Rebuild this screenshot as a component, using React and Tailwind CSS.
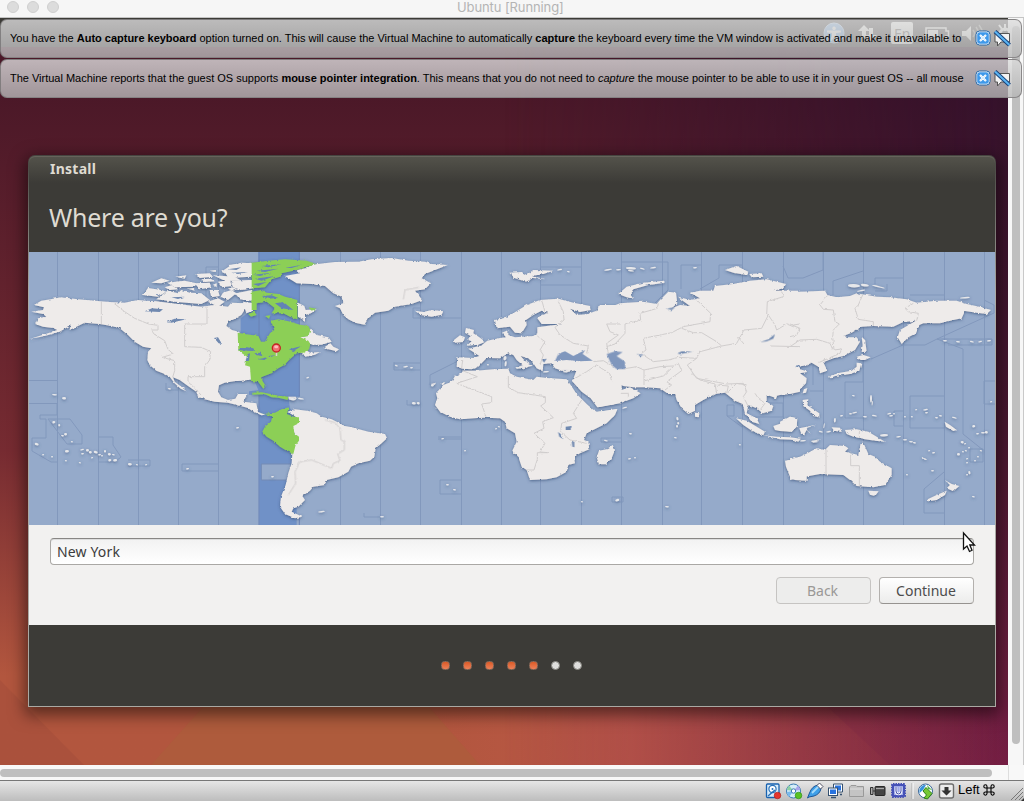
import React from "react";

const zoneX = [57, 98, 138, 178, 218, 340, 380, 420, 461, 501, 540, 581, 621, 662, 701, 742, 783, 823, 863, 903, 944, 984];

// [x, y, length, height] of the small islands, in map pixels
const islets = [
  [52, 421, 3, 2], [58, 424, 2, 2], [64, 433, 3, 2], [61, 435, 3, 1], [71, 441, 2, 1], [35, 443, 4, 2], [42, 454, 2, 1], [51, 456, 2, 1],
  [65, 450, 4, 2], [65, 460, 2, 1], [79, 462, 2, 1], [80, 449, 4, 1], [81, 453, 3, 1], [86, 449, 3, 2], [89, 451, 3, 2], [94, 451, 4, 2],
  [91, 457, 2, 1], [98, 454, 3, 1], [104, 450, 2, 2], [108, 453, 3, 2], [112, 454, 3, 1], [108, 459, 3, 2], [113, 459, 4, 2], [101, 455, 2, 1],
  [128, 463, 4, 2], [136, 464, 2, 1], [145, 464, 2, 1], [186, 468, 3, 1], [62, 397, 4, 2], [52, 394, 5, 1], [168, 388, 3, 1],
  [306, 377, 3, 1], [236, 427, 3, 1], [271, 476, 3, 1], [290, 398, 6, 2], [298, 398, 6, 1], [395, 365, 3, 1], [403, 366, 5, 1], [410, 367, 3, 1],
  [431, 384, 3, 2], [412, 402, 4, 2], [417, 402, 3, 2], [441, 438, 3, 1], [464, 450, 2, 1], [446, 484, 3, 1], [453, 489, 3, 1],
  [498, 426, 2, 1], [495, 428, 2, 1], [318, 511, 7, 1], [380, 516, 4, 1], [581, 501, 2, 1], [604, 440, 4, 1], [615, 499, 4, 2], [628, 458, 3, 1],
  [634, 457, 2, 1], [629, 433, 3, 1], [674, 437, 3, 1], [676, 417, 2, 3], [677, 422, 2, 2], [676, 425, 2, 2], [665, 506, 4, 1], [739, 444, 2, 1],
  [622, 407, 5, 1], [604, 269, 8, 1], [616, 269, 5, 1], [626, 267, 10, 2], [628, 270, 6, 1], [640, 268, 5, 1], [650, 267, 6, 1], [693, 267, 4, 1],
  [848, 284, 12, 3], [861, 284, 8, 2], [872, 286, 13, 1], [857, 290, 8, 1], [960, 297, 10, 1], [943, 340, 4, 1], [956, 341, 4, 1], [970, 341, 4, 1],
  [978, 341, 4, 1], [987, 340, 4, 1], [870, 395, 2, 7], [872, 401, 1, 4], [852, 395, 3, 1], [852, 412, 5, 1], [840, 415, 3, 1], [849, 413, 3, 1], [863, 416, 4, 1],
  [872, 415, 5, 1], [887, 413, 4, 1], [889, 415, 4, 1], [893, 413, 2, 1], [904, 416, 2, 1], [911, 416, 2, 1], [915, 409, 2, 1], [923, 409, 5, 1],
  [925, 412, 3, 1], [935, 417, 3, 1], [939, 415, 3, 1], [952, 417, 5, 1], [972, 425, 3, 2], [976, 433, 3, 1], [981, 432, 4, 1], [985, 431, 3, 2],
  [961, 441, 3, 2], [964, 443, 2, 1], [968, 447, 2, 1], [957, 453, 3, 2], [962, 451, 2, 1], [965, 450, 2, 1], [966, 458, 2, 1], [966, 462, 2, 1],
  [974, 460, 2, 1], [977, 456, 2, 1], [980, 450, 2, 1], [968, 471, 2, 3], [966, 474, 2, 1], [931, 470, 3, 1], [906, 474, 2, 1], [972, 496, 3, 1],
  [990, 401, 2, 1], [896, 436, 5, 1], [903, 439, 4, 1], [909, 441, 4, 1], [913, 442, 3, 1], [928, 450, 2, 1], [932, 452, 3, 1], [880, 434, 8, 2],
  [834, 418, 2, 4], [824, 423, 1, 5], [819, 431, 4, 1], [826, 431, 5, 1], [800, 440, 6, 1], [811, 441, 7, 1], [487, 364, 2, 1], [504, 356, 3, 4],
  [516, 367, 6, 1], [543, 371, 6, 1], [563, 371, 5, 1], [505, 361, 2, 5], [567, 271, 3, 1], [557, 269, 5, 1],
];

function Part({ x, children }) {
  return <g transform={`translate(${x} 250) scale(.33333)`}>{children}</g>;
}

function WorldMap() {
  return (
    <svg className="block h-[273px] w-[966px]" viewBox="29 252 966 273">
      <defs>
        <filter id="coast" x="-5%" y="-5%" width="110%" height="110%">
          <feDropShadow dx="0" dy="1" stdDeviation="1.5" floodColor="#3a527c" floodOpacity=".8" />
        </filter>
        <filter id="rough" x="-2%" y="-2%" width="104%" height="104%">
          <feTurbulence type="fractalNoise" baseFrequency=".3" numOctaves="2" seed="4" result="n" />
          <feDisplacementMap in="SourceGraphic" in2="n" scale="2.6" xChannelSelector="R" yChannelSelector="G" />
        </filter>
      </defs>
      <rect x="29" y="252" width="966" height="273" fill="#95aaca" />
      <Part x={225}>
        <path fill="#7091c7" d="M100,6H223V440H190L195,475 215,500V825H103V435L72,434V424L100,421 60,320 40,302 47,240V205L80,180V40L100,35Z" />
        <path d="M109,642H198V690H109Z" fill="#95aaca" stroke="#748cb5" strokeWidth="3" />
        <path d="M102,6V300M223,6V440M102,435V825M223,800V825" stroke="#6984b6" strokeWidth="3" />
      </Part>
      <g fill="none" stroke="#7f95ba" strokeWidth="1" opacity=".85">
        {zoneX.map((x) => (
          <path key={x} d={`M${x + 0.5},252V525`} />
        ))}
        <path d="M29,380.5H57M29,403.5H57V415H40V419H46V438H32V451L51,462H57M48,419H70L82,435V444H67ZM98,437H113V445L121,457 115,462H98M128,460H150V466H128M166,383V390H178M218,464H182V471H218M206,267H218M206,267V305" />
        <path d="M420,308H413V318H461M394,363H420M394,362V370H420M407,400V405H420M430,385V375L458,361M438,437H461M438,439H461M440,480H461M440,480V494H461M364,513V517H380" />
        <path d="M540,267H581M540,285H581M621,262H668V290L655,303M681,265H701M681,265V289M700,289L719,278V265H742M783,266L788,278H803L823,270M823,270V252M833,295V281L863,271M875,284V278H903M887,284V291H875M910,295H944M984,300L994,305V313L937,339 925,345H903L871,359M937,339L963,349V434L983,450M937,339H992V345H948" />
        <path d="M863,382H845V418H863M863,382V360M910,396H944M910,396V428H944M903,411H894V426H903M984,381H995M984,381V404H995M944,472L924,489V513H944M970,449H983V462H970ZM601,438H621M601,438V442H621M612,497H623V502H612ZM727,405H734V416H727ZM727,416L742,427M756,403H783V417H750M813,365V385M810,391H823" />
      </g>
      <g filter="url(#coast)">
        <g filter="url(#rough)">
          <g fill="#eeebea">
            <Part x={28}>
              <path d="M18,165L40,152 68,148 98,142 150,148 200,152 245,156 290,158 330,150 352,152 385,154 430,160 480,166 520,170 560,165 600,170 610,158 650,160 655,172 640,195 618,208 600,215 595,228 612,240 634,246 634,300 662,305 662,335 668,350 676,388 640,392 618,394 590,398 573,406 570,425 580,442 600,450 622,446 630,432 658,432 646,455 685,460 690,486 712,494 700,496 672,482 660,474 630,466 600,458 560,455 530,448 510,440 505,425 480,408 455,390 435,382 440,395 460,410 475,424 458,416 440,400 425,380 410,372 385,362 365,345 358,330 360,305 370,295 345,290 320,275 300,255 275,235 250,228 215,222 170,218 150,228 125,240 128,226 95,245 50,258 5,267 60,250 88,240 75,234 45,230 22,222 30,205 55,200 45,192 10,185 45,180 48,172Z" />
              <path d="M370,98L400,85 425,92 400,100ZM418,98L470,92 505,100 500,110 440,112ZM442,80L475,76 470,86ZM345,135L360,114 400,120 415,125 390,140ZM385,148L420,122 450,130 460,120 485,128 520,130 545,150 520,162 440,155ZM505,72L545,70 555,80 515,84ZM555,76L620,80 640,92 590,92ZM580,65L610,45 640,38 672,40 675,75 640,80 600,75ZM500,100L545,98 550,112 515,118ZM570,95L605,90 612,108 580,112ZM545,120L570,120 575,138 550,142ZM585,128L610,120 625,130 600,150 578,140ZM540,155L570,145 590,155 570,170ZM610,98L672,90 675,115 640,120 615,112ZM632,128L672,120 675,150 645,150ZM645,155L672,160 675,182 655,190Z" />
              <path d="M410,112L430,106 450,118 425,120ZM520,88L548,86 560,94 530,96ZM545,62L562,60 560,66ZM555,104L566,100 566,112ZM480,116L496,114 500,122ZM600,116L612,112 628,118 615,122Z" />
            </Part>
            <Part x={225}>
              <path d="M10,45L80,38V55L20,58ZM0,66L78,62V80L10,84ZM12,92L80,90V112L40,105ZM30,130L80,125V152L45,148ZM48,160L82,158V182L60,178Z" />
              <path d="M180,78L225,70 215,60 245,55 260,44 330,36 400,35 440,28 500,24 550,32 600,35 620,42 668,45 625,62 600,72 590,85 618,100 600,118 570,122 592,150 560,162 510,170 490,182 450,188 430,205 418,224 390,218 370,208 355,195 345,175 330,168 355,160 350,140 325,130 300,108 260,102 215,100Z" />
              <path d="M255,236L275,255 310,262 320,275 290,284 262,284 240,272 222,262 250,258ZM295,294L316,280 325,290 342,298 335,304ZM218,300L240,298 255,308 285,306 270,314 240,320 235,312ZM219,158L238,168 242,180 275,178 258,190 240,195 240,212 219,200ZM190,440L212,440 215,447 192,449Z" />
              <path d="M188,485L210,478 250,483 275,490 290,500 320,508 360,528 380,532 430,545 480,552 486,565 470,580 452,595 448,620 435,632 400,640 378,650 370,665 340,682 305,690 300,705 265,710 255,722 232,738 240,750 220,770 205,775 200,785 232,800 210,805 180,792 165,770 168,740 182,705 190,670 200,640 203,600 215,570 202,530 212,500Z" />
            </Part>
            <Part x={400}>
              <path d="M188,356L170,350 172,322 220,324 238,318 205,296 245,286 262,272 300,264 318,262 306,248 325,240 325,255 345,262 400,258 412,250 412,232 440,228 490,222 425,222 412,205 425,195 445,188 425,182 400,195 378,210 380,225 365,250 345,248 330,230 290,235 285,210 310,205 340,190 380,165 420,150 475,146 520,158 570,168 572,180 540,186 510,176 530,195 560,193 590,182 600,165 665,165V456L630,464 592,472 572,445 545,425 522,400 515,392 520,386 530,360 500,367 465,355 455,340 430,342 428,364 410,355 400,340 385,325 362,318 375,333 398,347 385,350 372,358 345,353 368,346 350,330 340,315 325,310 300,325 260,324 235,350 215,358Z" />
              <path d="M192,362L230,362 280,358 325,356 330,370 350,380 400,390 410,380 440,384 500,388 512,405 530,432 560,462 578,478 590,485 620,482 652,477 645,495 620,520 590,535 560,550 552,570 565,575 568,598 540,610 522,620 525,640 505,645 500,665 470,682 440,688 390,690 380,660 365,650 355,620 337,602 350,575 345,550 320,535 315,515 300,505 250,503 180,508 150,500 120,485 105,465 112,445 108,430 130,405 155,395 165,378ZM597,602L620,598 638,585 645,600 635,625 618,643 597,643 590,622Z" />
              <path d="M198,234L222,240 220,250 238,262 256,275 235,284 200,287 215,274 205,270 212,258 195,248ZM162,270L180,256 195,262 190,276 165,278ZM45,182L70,186 95,180 130,184 125,194 95,200 62,195ZM328,68L365,66 380,75 400,60 460,62 430,72 395,78 435,88 400,84 378,95 345,85ZM92,402L108,398 104,405ZM120,402L136,396 130,404Z" />
            </Part>
            <Part x={600}>
              <path d="M-5,168L30,172 60,160 130,155 170,162 180,150 205,125 228,128 232,160 215,175 240,165 270,168 245,150 235,140 270,150 300,145 270,128 300,122 340,122 345,108 400,102 450,92 500,88 558,102 550,115 520,122 600,122V425L570,432 540,435 518,440 500,435 500,455 520,468 515,482 488,490 470,475 445,465 440,490 470,505 478,522 455,515 435,490 428,462 405,452 390,440 375,428 345,432 310,450 285,465 285,482 265,492 245,475 230,450 225,432 205,432 180,415 140,412 100,412 70,408 50,398 30,390 40,402 65,420 90,412 122,430 100,445 60,460 -5,472ZM-5,485L52,477 40,500 0,522Z" />
              <path d="M55,132L80,110 130,98 192,92 195,98 145,105 100,118 92,135 100,146 80,142ZM375,60L410,48 445,65 440,75 400,68ZM448,72L485,70 490,80 455,82ZM285,488L298,490 296,502 285,500ZM408,505L440,512 470,530 495,545 490,556 460,545 430,525ZM490,556L530,560 570,562 602,566 600,570 540,568ZM520,528L545,520 570,500 592,505 590,530 575,545 540,543 525,540ZM515,438L532,436 528,446Z" />
              <path d="M555,632L620,622V692L585,690 572,685 558,650Z" />
            </Part>
            <Part x={790}>
              <path d="M-5,122L30,125 105,122 112,135 140,142 180,138 200,130 260,140 300,142 350,148 380,158 440,152 500,152 530,162 575,172 603,180 590,192 560,188 525,183 515,205 490,210 450,220 400,220 388,225 378,250 355,262 335,282 323,262 330,240 378,212 340,216 310,230 250,228 215,230 185,248 160,258 175,262 200,262 210,275 195,300 160,318 130,325 100,337 112,362 90,370 85,350 65,338 50,346 22,350 30,358 55,365 30,370 50,385 48,400 30,418 -5,427Z" />
              <path d="M0,628L30,620 55,608 80,595 105,600 120,585 165,588 175,595 165,605 205,615 212,580 220,578 235,612 255,620 270,635 305,655 305,675 285,705 250,712 200,708 180,690 160,675 90,672 45,680 0,690ZM235,722L266,724 255,738 240,734Z" />
              <path d="M215,260L225,270 228,290 230,305 215,306 218,285ZM200,320L220,315 242,322 225,330 212,330ZM118,378L150,368 185,362 200,350 200,338 214,340 208,362 180,372 135,378 120,385ZM42,418L52,414 48,428 38,430ZM38,450L55,448 52,465 65,475 88,490 88,502 70,498 60,482 40,468ZM165,540L200,538 235,545 260,560 285,575 255,572 225,568 190,560 170,552ZM125,532L150,533 155,546 132,542ZM28,535L50,530 78,524 50,534 62,552 50,540 42,554 33,548ZM-30,515L0,500 18,505 20,528 5,545 -28,540ZM2,568L30,570 25,575ZM65,572L90,568 70,578ZM464,515L480,525 500,540 490,543 468,530ZM413,748L440,735 470,722 465,735 440,750 415,754ZM464,690L485,702 508,708 490,724 470,715 480,705ZM395,622L412,628 405,630Z" />
            </Part>
          </g>
          <Part x={225}>
            <path fill="#8ccf57" d="M80,38L130,32 180,28 245,32 274,42 245,50 215,60 170,70 165,80 140,88 120,112 80,115ZM80,125L110,120 125,128 160,132 180,140 217,150V208L195,200 175,190 140,190 150,175 125,155 95,160 95,180 80,180ZM38,248L60,252 100,258 108,275 120,275 135,250 148,240 138,212 160,208 190,214 225,224 250,228 256,240 250,258 226,262 250,272 256,282 252,298 235,308 215,310 192,330 178,345 160,355 140,370 112,380 112,392 122,408 115,416 100,396 78,392 75,350 60,346 66,320 40,302ZM82,428L110,427 140,433 165,438 190,440 188,450 160,443 140,442 120,433 82,434ZM98,488L115,492 135,490 150,488 170,478 192,472 185,492 205,500 222,502 222,520 205,528 208,550 222,560 222,572 212,585 205,612 185,602 165,590 145,572 125,560 112,545 120,530 138,515 142,500 128,494ZM70,192L88,185 95,195 78,200ZM120,198L136,196 132,206ZM250,172L275,176 260,182Z" />
          </Part>
        </g>
      </g>
      <g fill="#7089b0" filter="url(#rough)">
        <Part x={28}>
          <path d="M350,184L372,175 405,178 395,186ZM415,216L440,206 475,208 430,218ZM558,264L570,262 582,282 572,280ZM380,132L402,134 392,138ZM430,142L470,140 450,147ZM600,58L640,52 625,60ZM610,68L660,66 630,72Z" />
        </Part>
        <Part x={225}>
          <path d="M38,300L60,291 85,295 90,303 65,302ZM68,312L75,310 72,332 62,334ZM88,310L108,308 112,318 95,316ZM98,328L130,322 118,330ZM130,318L152,316 135,322ZM95,62L160,56 120,66ZM90,86L150,78 110,92ZM110,48L170,42 130,52ZM84,74L140,68 105,78ZM84,102L125,96 100,108ZM180,54L230,44 200,54ZM150,160L175,156 205,180 170,175ZM110,138L140,136 160,144 130,146ZM192,298L230,288 205,303Z" fill="#6383b5" />
        </Part>
        <Part x={400}>
          <path fill="#8097bd" d="M465,333L475,311 495,304 520,318 555,300 548,312 578,332 540,334 500,330Z" />
          <path d="M497,530L515,528 512,540 497,540ZM474,546L482,552 490,568 478,560ZM515,572L523,576 523,592 517,590ZM425,328L440,326 432,338Z" />
        </Part>
        <Part x={600}>
          <path fill="#8097bd" d="M20,312L45,304 68,306 50,318 75,335 76,357 50,357 35,345Z" />
          <path d="M110,312L130,314 122,320ZM232,310L245,304 278,305 240,312ZM480,276L505,268 525,252 520,266 500,274ZM200,176L225,172 215,180ZM588,346H602V352H588Z" />
        </Part>
      </g>
      <g fill="none" stroke="#d0cdcd" filter="url(#rough)">
        <Part x={28}>
          <path strokeWidth="3" d="M220,156V222M258,160L290,185 320,205 362,222 390,226V240H370L378,252 410,272 420,298 436,312 403,322 440,332V362L434,382M537,170V222H470V290L520,292 548,305 545,330 530,350V380H480V395L505,420 520,436" />
        </Part>
        <Part x={225}>
          <path strokeWidth="3" d="M300,510L330,518 345,535 348,570 358,575V600L338,612 345,632 325,640 320,655 260,630 225,635 210,665 212,700 190,735M535,148L540,120 582,112" />
        </Part>
        <Part x={400}>
          <path strokeWidth="3" d="M188,362L232,380 170,400 275,440V458L245,462 258,500M325,378V412L355,428 436,440V458L422,468 460,503 428,515 432,535 402,550 435,580 420,606 443,608H412V628L402,660H380M545,450L520,490 530,505 485,520 482,545 510,570 560,580M188,330L185,355M412,258L435,275 420,300 430,315 420,345M425,150L435,185M475,155L490,185 492,210 465,232 480,255 520,280 565,288 560,310M520,388L560,365 590,345 600,352M660,222H620L630,245 655,255 620,280 625,310M580,335L610,332 640,350" />
        </Part>
        <Part x={600}>
          <path strokeWidth="3" d="M175,160L172,175 120,190 122,210 75,222V250L45,282 20,290M290,150L332,190 330,215 250,230 215,248 130,265 138,300 125,310M130,315L160,335 205,330 235,322 290,325M245,235L280,248 305,248 350,275 365,288 300,305 290,325 262,345 290,385 380,402 430,400 440,425M365,288L410,280 432,240 485,235 505,195 525,225 530,240 560,222 600,238M545,125L550,140 502,155 500,195M432,282L415,262M510,288L600,290M75,356L110,350 132,360 180,350 220,348 235,340 245,362 200,395 215,405 195,420M132,360V405M220,350L190,378 135,392M275,370L300,390 345,402 350,430M60,430L85,430 85,440M350,405L385,408 380,430M385,425L410,400 440,405M440,425L430,440 445,470M465,430L475,445 495,460 480,480M0,352L30,372 35,395M600,222L580,225" />
        </Part>
        <Part x={790}>
          <path strokeWidth="3" d="M112,137L90,165 100,178 130,180 135,215 148,222 130,240 128,262 132,300 155,297 150,310 88,337M218,135L205,165 195,175 205,208 250,215V228M370,160L345,175 355,185 385,190 380,212M0,290L30,270 80,268 120,280 128,298M0,222L30,235 20,255 0,260M108,598V672M182,605V647H208V708M208,540V565" />
        </Part>
      </g>
      <g fill="#e6e7ea" filter="url(#coast)">
        {islets.map(([x, y, w, h], i) => (
          <ellipse key={i} cx={x + w / 2} cy={y + h / 2 + 0.2} rx={w / 2} ry={h / 2 + 0.2} transform={`rotate(${((i * 37) % 31) - 15} ${x + w / 2} ${y})`} />
        ))}
      </g>
      <path d="M276.500,350V356" stroke="#d9d6d0" strokeWidth="1.500" />
      <circle cx="276.300" cy="348" r="4" fill="#f07070" stroke="#c32222" strokeWidth="1.300" />
      <ellipse cx="276.200" cy="346.800" rx="2" ry="1.500" fill="#fbb" />
    </svg>
  );
}

function NoticeIcons() {
  return (
    <svg className="-mt-[2px] h-[18px] w-[36px] shrink-0" viewBox="0 0 36 18">
      <rect x="1" y="2" width="14" height="14" rx="3.6" fill="#fff" stroke="#2767a6" />
      <rect x="2.2" y="3.2" width="11.6" height="11.6" rx="2.5" fill="#3f99ea" />
      <path d="M5 6L11 12M11 6L5 12" stroke="#fff" strokeWidth="2.200" />
      <path d="M5.500 6.500L10.500 11.500M10.500 6.500L5.500 11.500" stroke="#b7dcf8" strokeWidth=".6" />
      <path d="M20 4.500H34.500V13H26L22.500 17V13H20Z" fill="#f3f3f3" stroke="#555" />
      <path d="M20 2.500L34.500 16" stroke="#173f77" strokeWidth="4" />
      <path d="M20 2.500L34.500 16" stroke="#5bb4f2" strokeWidth="2.200" />
    </svg>
  );
}

function Notice({ children }) {
  return (
    <div className="flex h-[39px] w-[1022px] items-center rounded-[7px] border border-[#777476]/80 bg-linear-to-b from-[#dcdcdc]/80 to-[#b6b6b6]/80 pl-[9px] font-['Liberation_Sans',Arial,sans-serif] text-[11px] tracking-[-.009px] text-black">
      <div className="w-[965px] overflow-hidden whitespace-nowrap">{children}</div>
      <NoticeIcons />
    </div>
  );
}

function PanelIndicators() {
  return (
    <svg className="absolute top-0 right-0 h-[29px] w-[200px]" viewBox="808 18 200 29" fill="#f4f3ef">
      <circle cx="834" cy="33" r="10" fill="#6fa3e0" stroke="#a9c8ee" />
      <path d="M834 26.500a1.800 1.800 0 1 0 .1 0M827 30.500L841 30.500V32.500L836 33V36L838.500 41H836.500L834 37 831.500 41H829.500L832 36V33L827 32.500Z" />
      <path d="M864 25L870 31H866V38H862V31H858ZM871 41L865 35H869V28H873V35H877Z" />
      <rect x="891" y="22" width="22" height="22" rx="2" />
      <text x="894" y="39" fill="#55534d" fontSize="14" fontFamily="Noto Sans, sans-serif">En</text>
      <path d="M926 28H946V31H948.500V36H946V39H926Z" fill="none" stroke="#f4f3ef" strokeWidth="1.500" />
      <path d="M928 30H938V37H928ZM962 31H966L971 26V41L966 36H962Z" />
      <path d="M973 30q3 3.500 0 7M976 27q5 6.500 0 13M979 25q7 8.500 0 17" fill="none" stroke="#f4f3ef" strokeWidth="1.500" opacity=".5" />
      <circle cx="1005" cy="34" r="5" fill="none" stroke="#f4f3ef" strokeWidth="3" />
      <path d="M999 25L1002 29M1005 24V31" stroke="#f4f3ef" strokeWidth="2" />
    </svg>
  );
}

function StatusIcons() {
  return (
    <svg className="block h-[20px] w-[192px]" viewBox="764 781 192 20">
      <rect x="766.500" y="784" width="12.500" height="13.500" rx="1" fill="#d8ecfa" stroke="#1862b0" strokeWidth="1.300" />
      <circle cx="772.500" cy="789" r="3.600" fill="#fff" stroke="#2871b8" strokeWidth="1.200" />
      <circle cx="772.500" cy="789" r="1" fill="#2871b8" />
      <path d="M768 796L775 790" stroke="#2871b8" strokeWidth="1.500" />
      <circle cx="777.500" cy="795.500" r="3.300" fill="#e5352d" stroke="#a91a16" strokeWidth=".6" />

      <circle cx="793.500" cy="791" r="7" fill="#d5edf8" stroke="#3a7cb4" />
      <path d="M793.500 791L789 785.500A7 7 0 0 0 787 790Z" fill="#8dd0a3" />
      <path d="M793.500 791L798 785.500A7 7 0 0 1 800 790Z" fill="#aaa5ea" />
      <path d="M793.500 791L789 797A7 7 0 0 1 787 792Z" fill="#7ab9ec" />
      <circle cx="793.500" cy="791" r="2.200" fill="#fff" stroke="#3a7cb4" />
      <circle cx="798.500" cy="795.500" r="3.300" fill="#58c322" stroke="#278a10" strokeWidth=".6" />

      <path d="M807.500 798L809.500 793Q812 786 818 785L821 788.500Q820 794 814 796L809 797Z" fill="#3e9fe8" stroke="#1c5697" />
      <path d="M817 785.500L819.500 783 823 786.500 820.500 789Z" fill="#fff" stroke="#556" />
      <path d="M812 793L818 787" stroke="#a5dafa" strokeWidth="1.800" />

      <path d="M833.500 784H842.500V792H833.500Z" fill="#fff" stroke="#35506f" />
      <rect x="835" y="785.500" width="6" height="5" fill="#2873df" />
      <path d="M840 794.500H842" stroke="#35506f" strokeWidth="1.500" />
      <rect x="828.500" y="788" width="9" height="7.500" fill="#fff" stroke="#35506f" />
      <rect x="830" y="789.500" width="6" height="4.500" fill="#2873df" />
      <path d="M831 797.500H836" stroke="#35506f" strokeWidth="1.500" />

      <path d="M849.500 796.500V787L851 785.500H856L857 786.500H863.500V796.500Z" fill="#c4c4c4" stroke="#999" />
      <path d="M850 789H863" stroke="#ddd" />

      <path d="M870.500 787.500H873V794.500H870.500Z" fill="#aaa" stroke="#333" />
      <path d="M873 791H875" stroke="#333" />
      <rect x="875" y="786.500" width="10" height="9" rx="1" fill="#454545" stroke="#292929" />
      <path d="M876 788.500H884" stroke="#aaa" strokeWidth="1.300" />

      <rect x="892" y="784" width="13" height="13" rx="1" fill="#4652b7" stroke="#4652b7" strokeWidth="2" strokeDasharray="1.500 1" />
      <rect x="894" y="786" width="9" height="9" fill="#9faae8" />
      <path d="M896 787V791Q896 794 898.500 794T901 791V787" fill="none" stroke="#fff" strokeWidth="2.500" />
      <path d="M896 787V791Q896 794 898.500 794T901 791V787" fill="none" stroke="#3c49a8" strokeWidth="1" />

      <path d="M912 783V799" stroke="#aaa" />
      <path d="M913 783V799" stroke="#fff" />

      <circle cx="925.500" cy="791" r="7" fill="#fff" stroke="#38679a" />
      <path d="M919.500 790Q921 784.500 926 785L923 790 919.500 793Z" fill="#3994dc" />
      <path d="M927 785L932 790 928 789Z" fill="#54b744" />
      <path d="M924 798L926.500 795 923 791 926 787.500 932 793.500 927.500 799Z" fill="#76c834" stroke="#2e7c16" />

      <rect x="939.500" y="784" width="14" height="14" rx="2" fill="#ececec" stroke="#6d6d6d" strokeWidth="1.400" />
      <path d="M944.500 787H948.500V790.500H951.500L946.500 795.500 941.500 790.500H944.500Z" fill="#333" />
    </svg>
  );
}

function InstallWindow() {
  return (
    <section className="mt-[137px] ml-7 h-[552px] w-[968px] rounded-t-[7px] bg-linear-to-b from-[#45443f] via-[#aaa9a3] via-25% to-[#aaa9a3] p-px font-['Noto_Sans',sans-serif] shadow-[0_5px_16px_3px_rgba(0,0,0,.5)]">
      <header className="h-24 rounded-t-[6px] bg-linear-to-b from-[#54534b] via-[#3c3b37] via-28% to-[#3c3b37] pl-[21px] shadow-[inset_0_1px_0_#65645b]">
        <div className="h-[27px] pt-[2px] text-[14px] leading-[22px] font-bold tracking-[.25px] text-[#dfdbd2]">Install</div>
        <h1 className="mt-[16px] -ml-px text-[25px] leading-[36px] tracking-[-.25px] text-[#dfdbd2]">Where are you?</h1>
      </header>
      <WorldMap />
      <div className="h-[100px] bg-[#f2f1f0] px-[21px] pt-[13px] text-[14px] text-[#4c4c4c]">
        <div className="flex h-[27px] items-center rounded-[4px] border border-[#aaa8a5] border-t-[#888684] bg-linear-to-b from-[#f2f2f2] to-white pl-[6px] text-[#3c3c3c] shadow-[inset_0_1px_0_#ddd]">
          <span className="tracking-[.15px]">New York</span>
        </div>
        <div className="mt-3 flex justify-end gap-2">
          <button className="h-[27px] w-[95px] rounded-[4px] border border-[#c6c4c2] bg-[#ededec] pr-[2px] text-[#9a9896]">Back</button>
          <button className="h-[27px] w-[95px] rounded-[4px] border border-[#b3b0ad] border-b-[#969390] bg-linear-to-b from-white to-[#ececeb] pr-px">Continue</button>
        </div>
      </div>
      <footer className="flex h-[81px] items-center justify-center gap-[13px] bg-[#3c3b37] pr-px">
        {[0, 1, 2, 3, 4].map((n) => (
          <i key={n} className="h-[9px] w-[9px] rounded-[3.5px] border border-[#8d6a58] bg-linear-to-b from-[#db5a25] to-[#ec8057]" />
        ))}
        {[5, 6].map((n) => (
          <i key={n} className="h-[9px] w-[9px] rounded-full border border-[#85847e] bg-[#dededc]" />
        ))}
      </footer>
    </section>
  );
}

export default function App() {
  return (
    <div className="relative flex h-[801px] w-[1024px] flex-col overflow-hidden bg-[#f7f7f7]">
      <header className="flex h-[18px] shrink-0 items-start border-b border-[#c4c4c4] bg-[#f6f6f6] pl-[7px] font-['Inter',sans-serif] text-[13px] leading-[15px] tracking-[-.1px] text-[#b4b4b4]">
        <div className="flex w-[450px] gap-2 pt-px">
          <i className="h-3 w-3 rounded-full border border-[#cfcfcf] bg-[#dcdcdc]" />
          <i className="h-3 w-3 rounded-full border border-[#cfcfcf] bg-[#dcdcdc]" />
          <i className="h-3 w-3 rounded-full border border-[#cfcfcf] bg-[#dcdcdc]" />
        </div>
        <span>Ubuntu [Running]</span>
      </header>

      <main className="flex h-[747px] shrink-0">
        <div className="relative h-[747px] w-[1008px] overflow-hidden bg-linear-to-b from-[#4b1828] from-10% via-[#762b31] via-58% to-[#b2563e] to-88%">
          <div className="absolute inset-0 bg-linear-to-b from-[#30102a] via-[#48172f] via-55% to-[#751f43] mask-l-from-0% mask-l-to-50%" />
          <svg className="absolute inset-0 h-full w-full" viewBox="0 18 1008 747">
            <defs>
              <linearGradient id="glow" x1="0" x2="1" y1="0" y2="0">
                <stop offset="0" stopColor="#cb5c58" stopOpacity="0" />
                <stop offset=".35" stopColor="#cb5c58" stopOpacity=".35" />
                <stop offset="1" stopColor="#9c3350" stopOpacity="0" />
              </linearGradient>
            </defs>
            <path d="M0,680L84,765H0Z" fill="#8a4038" opacity=".2" />
            <path d="M203,707L151,765H480L429,707Z" fill="#a8643a" opacity=".4" />
            <path d="M429,707L480,765H1008V707Z" fill="url(#glow)" />
            <path d="M820,700L890,765H1008V700Z" fill="#601440" opacity=".1" />
          </svg>
          <div className="absolute inset-x-0 top-0 h-[29px] bg-[#3c3b37]">
            <PanelIndicators />
          </div>
          <div className="relative flow-root">
            <InstallWindow />
          </div>
        </div>
        <div className="flex w-4 justify-center border-r border-[#c9c9c9] bg-[#f7f7f7] pt-2">
          <div className="h-[718px] w-2 rounded-full bg-[#bfbfbf]" />
        </div>
      </main>
      <div className="flex h-[15px] shrink-0 bg-[#f8f8f8]">
        <div className="w-[1009px] border-r border-[#ddd] pt-1">
          <div className="h-2 w-[992px] rounded-full bg-[#bfbfbf]" />
        </div>
      </div>
      <footer className="flex h-[21px] shrink-0 items-center border-t border-[#777] bg-linear-to-b from-[#e6e6e6] to-[#bdbdbd] font-['Liberation_Sans',Arial,sans-serif] text-[13px] text-black">
        <div className="ml-[764px]">
          <StatusIcons />
        </div>
        <span className="ml-[2px] flex items-center gap-[3px] pb-[2px]">
          <span>Left</span>
          <svg className="h-3 w-3" viewBox="0 0 12 12" fill="none" stroke="#000" strokeWidth="1.100">
            <path d="M4 4H8V8H4ZM4 4H2.400A1.600 1.600 0 1 1 4 2.400ZM8 4V2.400A1.600 1.600 0 1 1 9.600 4ZM8 8H9.600A1.600 1.600 0 1 1 8 9.600ZM4 8V9.600A1.600 1.600 0 1 1 2.400 8Z" />
          </svg>
        </span>
        <svg className="ml-auto h-[20px] w-[14px]" viewBox="0 0 14 20" stroke="#777">
          <path d="M1 19L13 7M5 19L13 11M9 19L13 15" />
          <path d="M11 20L14 17V20Z" fill="#333" stroke="none" />
        </svg>
      </footer>

      <div className="absolute top-[19px] left-0 flex flex-col gap-px">
        <Notice>
          You have the <b>Auto capture keyboard</b> option turned on. This will cause the Virtual Machine to automatically <b>capture</b> the keyboard every time the VM window is activated and make it unavailable to
        </Notice>
        <Notice>
          The Virtual Machine reports that the guest OS supports <b>mouse pointer integration</b>. This means that you do not need to <em>capture</em> the mouse pointer to be able to use it in your guest OS -- all mouse
        </Notice>
      </div>

      <svg className="absolute top-[531px] left-[962px] h-[24px] w-[15px]" viewBox="0 0 15 24">
        <path d="M1.500 2V18L5 15 7.500 20.500 10 19.300 7.800 14H12.500Z" fill="#fff" stroke="#111" strokeWidth="1.300" />
      </svg>
    </div>
  );
}
